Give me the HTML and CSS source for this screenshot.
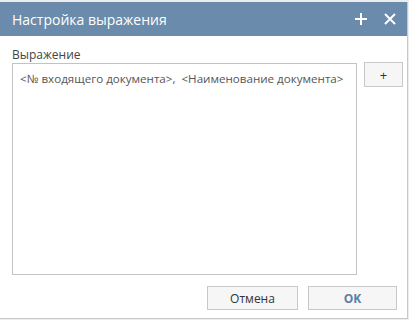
FILE: index.html
```html
<!DOCTYPE html>
<html>
<head>
    <meta charset="utf-8">
    <link rel="stylesheet" href="styles.css">
</head>
<body>
    <!-- окно настройки выражения -->
    <div class="dialog">
        <div class="dialog-header">
            <span class="dialog-title">Настройка выражения</span>
            <div class="header-tools">
                <button class="tool-button" aria-label="Добавить">
                    <svg width="14" height="14" viewBox="0 0 14 14">
                        <path d="M7 1V13M1 7H13" stroke="#FFFFFF" stroke-width="2" fill="none" />
                    </svg>
                </button>
                <button class="tool-button" aria-label="Закрыть">
                    <svg width="14" height="14" viewBox="0 0 14 14">
                        <path d="M2 2L12 12M12 2L2 12" stroke="#FFFFFF" stroke-width="2" fill="none" />
                    </svg>
                </button>
            </div>
        </div>

        <div class="dialog-body">
            <div class="field-label">Выражение</div>
            <div class="expression-row">
                <div class="expression-box">&lt;№ входящего документа&gt;,&nbsp; &lt;Наименование документа&gt;</div>
                <button class="add-button">+</button>
            </div>
        </div>

        <div class="dialog-footer">
            <button class="footer-button">Отмена</button>
            <button class="footer-button ok-button">OK</button>
        </div>
    </div>
</body>
</html>
```

FILE: styles.css
```css
/* общие стили */
body {
    margin: 0;
    padding: 0;
    background-color: #ececec;
    font-family: 'Open Sans', 'Noto Sans', Arial, sans-serif;
}

button {
    font-family: inherit;
    cursor: pointer;
}

/* окно */
.dialog {
    box-sizing: border-box;
    width: 408px;
    height: 317px;
    margin-top: 2px;
    background-color: #FFFFFF;
    border-right: 1px solid #c8c8c8;
    border-bottom: 1px solid #c8c8c8;
    display: flex;
    flex-direction: column;
}

.dialog-header {
    height: 34px;
    background-color: #6a8bab;
    color: #FFFFFF;
    display: flex;
    align-items: center;
    justify-content: space-between;
    padding: 0 10px 0 12px;
}

.dialog-title {
    font-size: 14px;
}

.header-tools {
    display: flex;
    gap: 15px;
}

.tool-button {
    background: transparent;
    border: none;
    padding: 0;
    width: 14px;
    height: 14px;
    display: flex;
}

/* содержимое */
.dialog-body {
    padding: 10px 4px 0 12px;
}

.field-label {
    font-size: 12px;
    line-height: 17px;
    color: #444;
}

.expression-row {
    display: flex;
    gap: 7px;
    align-items: flex-start;
}

.expression-box {
    box-sizing: border-box;
    width: 345px;
    height: 212px;
    border: 1px solid #c3c3c3;
    padding: 5px 7px;
    font-size: 11.6px;
    line-height: 20px;
    color: #555;
    white-space: nowrap;
}

.add-button {
    box-sizing: border-box;
    width: 39px;
    height: 25px;
    margin-top: -1px;
    background-color: #f6f6f6;
    border: 1px solid #c8c8c8;
    font-size: 13px;
    color: #333;
    padding: 0;
}

/* кнопки внизу */
.dialog-footer {
    display: flex;
    justify-content: flex-end;
    gap: 10px;
    padding: 11px 10px 0 0;
}

.footer-button {
    box-sizing: border-box;
    width: 91px;
    height: 24px;
    background-color: #f6f6f6;
    border: 1px solid #c8c8c8;
    font-size: 12px;
    color: #333;
    padding: 0;
}

.ok-button {
    width: 89px;
    font-weight: bold;
    color: #5b7fa4;
}
```
